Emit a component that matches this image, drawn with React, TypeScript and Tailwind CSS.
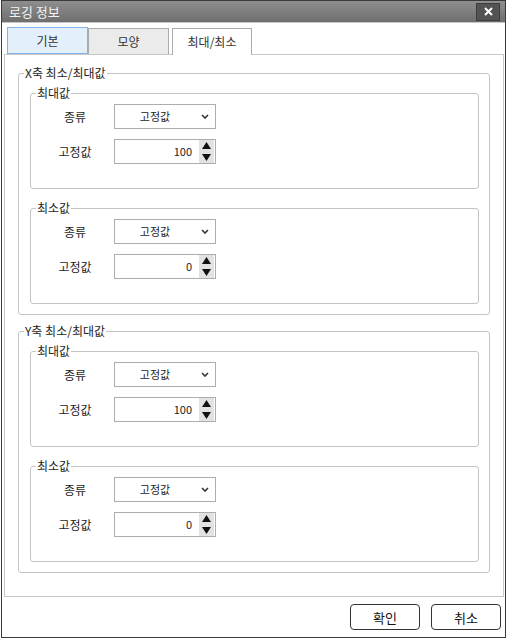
import React from "react";

const font = { fontFamily: '"Noto Sans CJK KR", "Noto Sans", sans-serif' };

function SelectBox() {
  return (
    <div className="flex h-[25px] w-[102px] items-center border border-[#adadad] bg-white">
      <span className="flex-1 text-center text-[11px] leading-none text-[#222]">고정값</span>
      <span className="flex w-[20px] justify-center">
        <svg width="8" height="5" viewBox="0 0 8 5">
          <path d="M1 1l3 3 3-3" stroke="#333" strokeWidth="1.6" fill="none" />
        </svg>
      </span>
    </div>
  );
}

function NumberBox({ value }: { value: string }) {
  return (
    <div className="flex h-[25px] w-[102px] items-center border border-[#adadad] bg-white">
      <span className="flex-1 pr-[7px] text-right text-[11px] leading-none text-[#222]">{value}</span>
      <div className="mr-px flex h-[23px] w-[15px] flex-col items-center justify-between bg-[#e2e2e2] py-[2px]">
        <svg width="9" height="7" viewBox="0 0 9 7">
          <path d="M4.5 0L9 7H0z" fill="#111" />
        </svg>
        <svg width="9" height="7" viewBox="0 0 9 7">
          <path d="M0 0h9L4.5 7z" fill="#111" />
        </svg>
      </div>
    </div>
  );
}

function Row({ label, children }: { label: string; children: React.ReactNode }) {
  return (
    <div className="flex items-center">
      <span className="ml-[9px] mr-[4px] w-[70px] text-center text-[12px] leading-none text-[#1e1e1e]">{label}</span>
      {children}
    </div>
  );
}

function ValueGroup({ title, value, className = "" }: { title: string; value: string; className?: string }) {
  return (
    <fieldset className={`rounded-[3px] border border-[#c4c4c4] p-0 ${className}`}>
      <legend className="ml-[5px] px-[1px] text-[12px] leading-[16px] text-[#1e1e1e]">{title}</legend>
      <div className="flex flex-col gap-[10px] pb-[24px] pt-[3px]">
        <Row label="종류">
          <SelectBox />
        </Row>
        <Row label="고정값">
          <NumberBox value={value} />
        </Row>
      </div>
    </fieldset>
  );
}

function AxisGroup({ title, className = "" }: { title: string; className?: string }) {
  return (
    <fieldset className={`rounded-[3px] border border-[#c4c4c4] p-0 ${className}`}>
      <legend className="ml-[5px] px-[1px] text-[12px] leading-[16px] text-[#1e1e1e]">{title}</legend>
      <div className="pb-[10px] pl-[11px] pr-[10px] pt-[4px]">
        <ValueGroup title="최대값" value="100" />
        <ValueGroup title="최소값" value="0" className="mt-[11px]" />
      </div>
    </fieldset>
  );
}

export default function App() {
  return (
    <div className="h-[640px] w-[510px] bg-white" style={font}>
      <div className="ml-px flex h-[638px] w-[505px] flex-col border border-[#3a3a3a] bg-white">
        <div className="flex h-[22px] items-center justify-between border-b border-[#c6c6c6] bg-gradient-to-b from-[#8e8e8e] to-[#6e6e6e] pl-[7px] pr-[5px]">
          <span className="text-[13px] leading-none text-[#f4f4f4]">로깅 정보</span>
          <button className="flex h-[18px] w-[24px] items-center justify-center border border-[#3c3c3c] bg-[#535353]">
            <svg width="9" height="9" viewBox="0 0 9 9">
              <path d="M1 1l7 7M8 1l-7 7" stroke="#fff" strokeWidth="2" />
            </svg>
          </button>
        </div>

        <div className="flex flex-col pl-[2px] pt-[4px]">
          <div className="relative z-10 ml-[3px] flex items-end">
            <div className="flex h-[27px] w-[81px] items-center justify-center border border-[#7eb4ea] bg-[#e3effb] text-[12px] leading-none text-[#333]">
              기본
            </div>
            <div className="flex h-[26px] w-[81px] items-center justify-center border border-b-0 border-[#acacac] bg-[#ebebeb] text-[12px] leading-none text-[#333]">
              모양
            </div>
            <div className="-mb-px ml-[3px] flex h-[27px] w-[80px] items-center justify-center border border-b-0 border-[#acacac] bg-white text-[12px] leading-none text-[#333]">
              최대/최소
            </div>
          </div>
          <div className="w-[500px] border border-[#c8c8c8] bg-white px-[13px] pb-[23px] pt-[10px]">
            <AxisGroup title="X축 최소/최대값" />
            <AxisGroup title="Y축 최소/최대값" className="mt-[8px]" />
          </div>
        </div>

        <div className="mt-[7px] flex justify-end gap-[11px] pr-[4px]">
          <button className="h-[26px] w-[70px] rounded-[4px] border border-[#333] bg-white text-[13px] leading-none text-[#111]">
            확인
          </button>
          <button className="h-[26px] w-[70px] rounded-[4px] border border-[#333] bg-white text-[13px] leading-none text-[#111]">
            취소
          </button>
        </div>
      </div>
    </div>
  );
}
